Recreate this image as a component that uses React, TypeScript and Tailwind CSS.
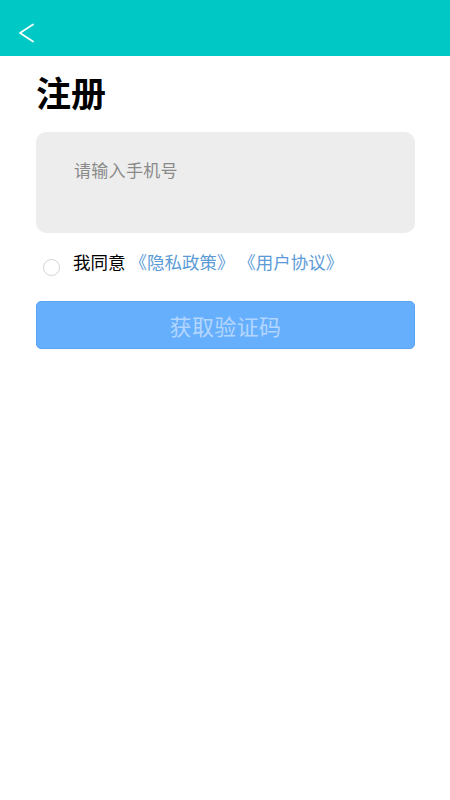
import React, { useState } from 'react';

const font = "font-['Noto_Sans_CJK_SC','Noto_Sans',sans-serif]";

export default function App() {
  const [agreed, setAgreed] = useState(false);
  const [phone, setPhone] = useState('');

  return (
    <div className={`min-h-[800px] w-[450px] bg-white ${font}`}>
      {/* Header */}
      <div className="h-[56px] bg-[#00c9c5] pl-[18px] pt-[23px]">
        <button className="block">
          <svg width="16" height="20" viewBox="0 0 16 20" fill="none">
            <path d="M15 1.5 L2 10 L15 18.5" stroke="white" strokeWidth="1.7" strokeLinecap="round" strokeLinejoin="round" />
          </svg>
        </button>
      </div>

      <div className="pl-[36px] pr-[35px]">
        <h1 className="mt-[14px] text-[35px] font-bold leading-[44px] text-black">注册</h1>

        {/* Phone input */}
        <div className="mt-[18px] h-[101px] rounded-[10px] bg-[#ededed] px-[38px] pt-[25px]">
          <input
            value={phone}
            onChange={(e) => setPhone(e.target.value)}
            placeholder="请输入手机号"
            className="w-full bg-transparent text-[17px] tracking-[0.3px] leading-[26px] text-black outline-none placeholder:text-[#8a8a8a]"
          />
        </div>

        {/* Agreement */}
        <div className="mt-[17px] flex items-start">
          <button
            onClick={() => setAgreed(!agreed)}
            className={`ml-[7px] mt-[9px] h-[17px] w-[17px] shrink-0 rounded-full border ${agreed ? 'border-[#66aefd] bg-[#66aefd]' : 'border-[#d4d4d4] bg-white'}`}
          />
          <p className="ml-[13px] whitespace-nowrap text-[17.5px] leading-[24px] text-black">
            我同意 <span className="text-[#5c9bd6]">《隐私政策》</span>{' '}
            <span className="text-[#5c9bd6]">《用户协议》</span>
          </p>
        </div>

        {/* Submit */}
        <button className="mt-[25px] flex h-[48px] w-full items-center justify-center rounded-[5px] border border-[#5aa2f2] bg-[#66affd] text-[22px] tracking-[0.4px] text-[#b3d6ff]">
          获取验证码
        </button>
      </div>
    </div>
  );
}
